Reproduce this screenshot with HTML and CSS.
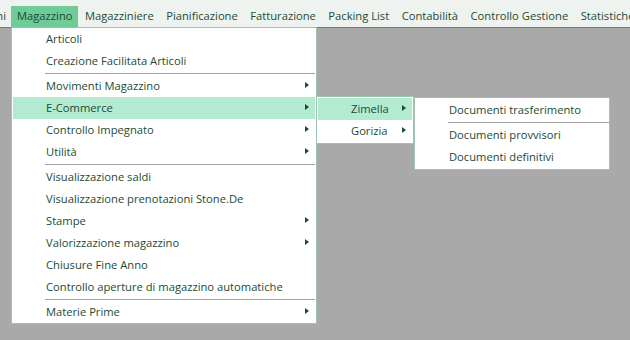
FILE: index.html
```html
<!DOCTYPE html>
<html>
<head>
	<title>Magazzino</title>
	<link rel="stylesheet" href="styles.css">
</head>
<body>
	<div class="menubar">
		<span class="bar-item cut">ni</span>
		<span class="bar-item active">Magazzino
			<div class="menu main">
				<ul>
					<li><a>Articoli</a></li>
					<li><a>Creazione Facilitata Articoli</a></li>
					<li class="sep"></li>
					<li class="has-sub"><a>Movimenti Magazzino</a></li>
					<li class="has-sub hover"><a>E-Commerce</a>
						<div class="menu sub sub1">
							<ul>
								<li class="has-sub hover"><a>Zimella</a>
									<div class="menu sub sub2">
										<ul>
											<li><a>Documenti trasferimento</a></li>
											<li class="sep"></li>
											<li><a>Documenti provvisori</a></li>
											<li><a>Documenti definitivi</a></li>
										</ul>
									</div>
								</li>
								<li class="has-sub"><a>Gorizia</a></li>
							</ul>
						</div>
					</li>
					<li class="has-sub"><a>Controllo Impegnato</a></li>
					<li class="has-sub"><a>Utilità</a></li>
					<li class="sep"></li>
					<li><a>Visualizzazione saldi</a></li>
					<li><a>Visualizzazione prenotazioni Stone.De</a></li>
					<li class="has-sub"><a>Stampe</a></li>
					<li class="has-sub"><a>Valorizzazione magazzino</a></li>
					<li><a>Chiusure Fine Anno</a></li>
					<li><a>Controllo aperture di magazzino automatiche</a></li>
					<li class="sep"></li>
					<li class="has-sub"><a>Materie Prime</a></li>
				</ul>
			</div>
		</span>
		<span class="bar-item">Magazziniere</span>
		<span class="bar-item">Pianificazione</span>
		<span class="bar-item">Fatturazione</span>
		<span class="bar-item">Packing List</span>
		<span class="bar-item">Contabilità</span>
		<span class="bar-item">Controllo Gestione</span>
		<span class="bar-item">Statistiche</span>
	</div>
	<div class="workspace"></div>
</body>
</html>
```
FILE: styles.css
```css
*{
	margin: 0;
	padding: 0;
	box-sizing: border-box;
}
html, body{
	height: 100%;
	overflow: hidden;
}
body{
	display: flex;
	flex-direction: column;
	font-family: "Open Sans", "Noto Sans", sans-serif;
	font-size: 11.2px;
	color: #1d4a33;
	background-color: #a9a9a9;
}
.menubar{
	display: flex;
	align-items: flex-end;
	flex-shrink: 0;
	height: 28px;
	background-color: #eef3f0;
	border-bottom: 1px solid #767676;
	white-space: nowrap;
}
.bar-item{
	position: relative;
	flex-shrink: 0;
	height: 21px;
	line-height: 20px;
	padding: 0 6px;
	margin-right: 0.5px;
}
.bar-item.cut{
	width: 11px;
	padding: 0 5px 0 0;
	margin-right: 0;
	overflow: hidden;
	direction: rtl;
}
.bar-item.active{
	background-color: #6fcb98;
	height: 22px;
	margin-bottom: -1px;
}
.workspace{
	flex: 1;
}

.menu{
	position: absolute;
	background-color: #fff;
	border: 1px solid #9ec4b0;
	z-index: 2;
	direction: ltr;
}
.menu ul{
	list-style: none;
}
.menu li{
	position: relative;
	height: 22px;
	line-height: 22px;
}
.menu li a{
	display: block;
	height: 22px;
	padding-left: 33px;
}
.menu li.hover > a{
	background-color: #b2ebd1;
}
.menu li.has-sub > a::after{
	content: "";
	position: absolute;
	top: 7px;
	right: 6px;
	border-top: 3.5px solid transparent;
	border-bottom: 3.5px solid transparent;
	border-left: 4px solid #1d4a33;
}
.menu li.sep{
	height: 3px;
	margin-left: 32px;
	background: linear-gradient(#a0a0a0, #a0a0a0) no-repeat 0 1px / 100% 1px;
}

.main{
	top: 21px;
	left: 0;
	width: 306px;
	padding: 0 1px;
}
.sub{
	top: -1px;
	padding: 1px;
}
.sub1{
	width: 98px;
	left: 303px;
}
.sub2{
	width: 196px;
	left: 96px;
}
.sub2 li.sep{
	margin-right: -1px;
}
```
